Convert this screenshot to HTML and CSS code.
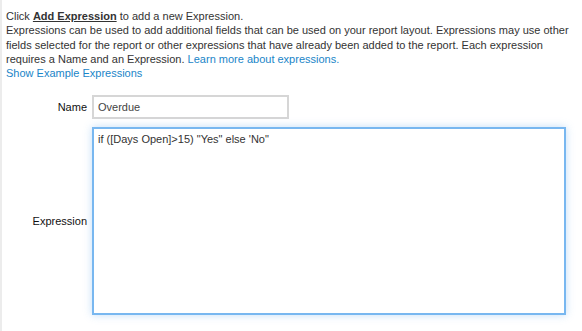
FILE: index.html
```html
<!DOCTYPE html>
<html>
<head>
<meta charset="utf-8">
<link rel="stylesheet" href="styles.css">
</head>
<body>
<div class="page">
  <div class="intro">
    <p>Click <a class="strong-link">Add Expression</a> to add a new Expression.</p>
    <p>Expressions can be used to add additional fields that can be used on your report layout. Expressions may use other fields selected for the report or other expressions that have already been added to the report. Each expression requires a Name and an Expression. <a class="link">Learn more about expressions.</a></p>
    <p><a class="link">Show Example Expressions</a></p>
  </div>
  <div class="form">
    <div class="row">
      <label class="label">Name</label>
      <div class="input">Overdue</div>
    </div>
    <div class="row row-area">
      <label class="label">Expression</label>
      <div class="textarea">if ([Days Open]&gt;15) "Yes" else 'No"</div>
    </div>
  </div>
</div>
</body>
</html>
```
FILE: styles.css
```css
html, body {
  margin: 0;
  padding: 0;
  background: #fff;
}
body {
  font-family: "Liberation Sans", Arial, sans-serif;
  font-size: 11px;
  color: #333;
}
.page {
  border-left: 2px solid #ececec;
  height: 331px;
  box-sizing: border-box;
  padding: 9px 8px 0 4px;
}
.intro p {
  margin: 0;
  line-height: 14.3px;
}
.strong-link {
  font-weight: bold;
  text-decoration: underline;
  color: #333;
}
.link {
  color: #1a85c8;
}
.form {
  margin-top: 15px;
}
.row {
  display: flex;
  align-items: center;
}
.label {
  width: 81px;
  text-align: right;
  color: #111;
  padding-right: 5px;
}
.input {
  width: 185px;
  height: 20px;
  border: 2px solid #d6d6d6;
  padding: 0 4px;
  line-height: 20px;
  color: #444;
}
.row-area {
  margin-top: 8px;
}
.textarea {
  width: 462px;
  height: 176px;
  border: 2px solid #78b7f0;
  box-shadow: 0 0 8px rgba(120, 180, 240, 0.45);
  padding: 4px 4px;
  color: #333;
}
```
